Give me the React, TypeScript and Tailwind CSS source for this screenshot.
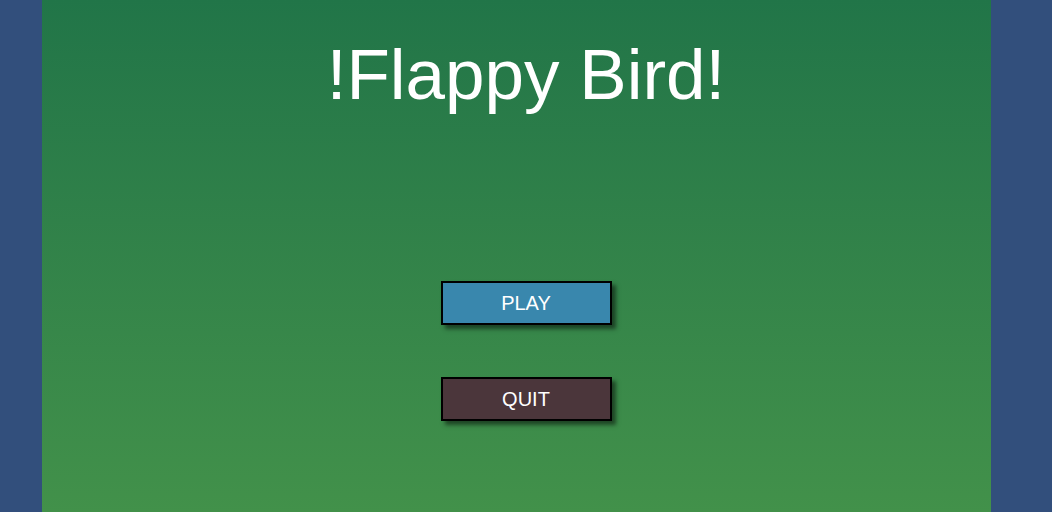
export default function App() {
  return (
    <div className="flex w-screen h-screen overflow-hidden bg-[#324f7c] font-['Liberation_Sans',Arial,sans-serif]">
      <div className="w-[42px] shrink-0 bg-[#324f7c]" />

      <div className="flex-1 flex flex-col items-center pl-[19px] bg-gradient-to-b from-[#217548] to-[#42914a]">
        <h1 className="pt-[39px] text-[71px] leading-none text-white">!Flappy Bird!</h1>

        <div className="mt-[171px] flex flex-col gap-[52px]">
          <button className="w-[171px] h-[44px] border-2 border-black bg-[#3987ad] text-[20px] text-white shadow-[4px_4px_4px_rgba(0,0,0,0.5)]">
            PLAY
          </button>
          <button className="w-[171px] h-[44px] border-2 border-black bg-[#4b363b] text-[20px] text-white shadow-[4px_4px_4px_rgba(0,0,0,0.5)]">
            QUIT
          </button>
        </div>
      </div>

      <div className="w-[61px] shrink-0 bg-[#324f7c]" />
    </div>
  );
}
